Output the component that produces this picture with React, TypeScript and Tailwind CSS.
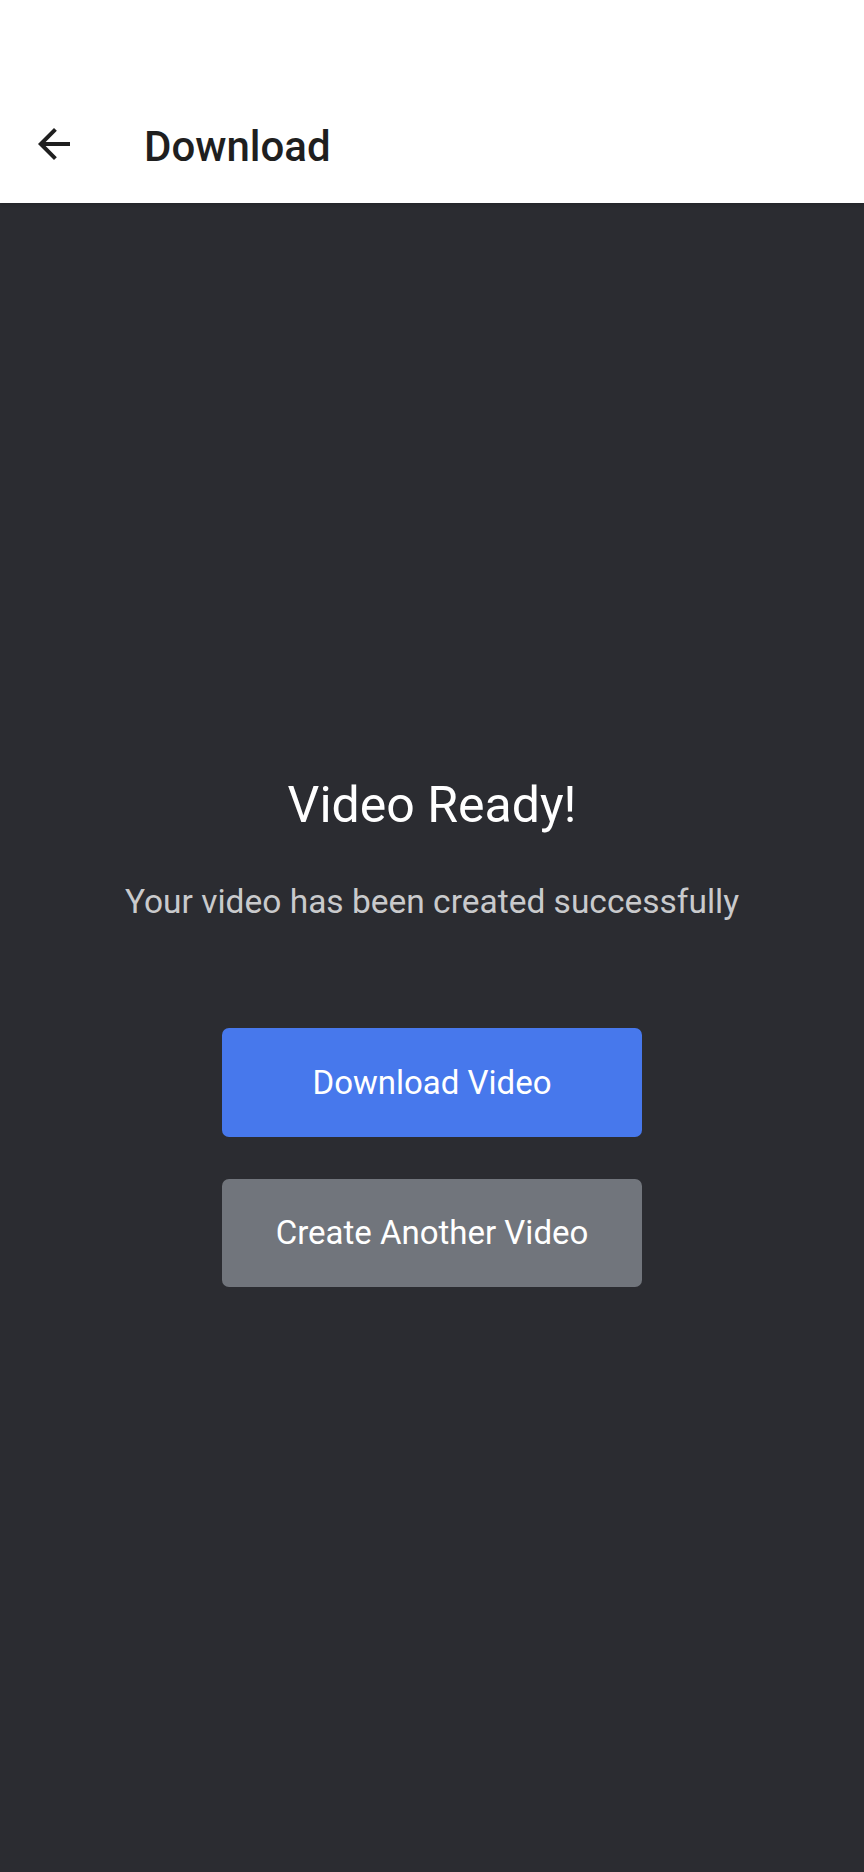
import React from 'react'

const ArrowBack: React.FC<{ className?: string }> = ({ className }) => (
  <svg viewBox="0 0 24 24" className={className} fill="currentColor" aria-hidden="true">
    <path d="M20 11H7.83l5.59-5.59L12 4l-8 8 8 8 1.41-1.41L7.83 13H20v-2z" />
  </svg>
)

export default function App() {
  return (
    <div
      className="flex min-h-[1872px] w-full flex-col bg-[#2b2c31]"
      style={{ fontFamily: 'Roboto, "Noto Sans", sans-serif' }}
    >
      <header className="flex h-[203px] shrink-0 items-start bg-white pt-[120px] shadow-[0_2px_3px_rgba(0,0,0,0.15)]">
        <button className="ml-[30px] flex h-[48px] w-[48px] items-center justify-center text-[#1f1f1f]" aria-label="Back">
          <ArrowBack className="h-[48px] w-[48px]" />
        </button>
        <h1 className="ml-[66px] mt-[3px] text-[42px] leading-[48px] font-medium text-[#1f1f1f]">Download</h1>
      </header>

      <main className="flex flex-1 flex-col items-center pt-[574px]">
        <h2 className="text-[50px] leading-[56px] text-white">Video Ready!</h2>
        <p className="mt-[49px] text-[33.5px] leading-[40px] text-[#c9cacc]">
          Your video has been created successfully
        </p>
        <div className="mt-[106px] flex w-[420px] flex-col gap-[42px]">
          <button className="h-[109px] w-full rounded-[7px] bg-[#4778ec] text-[33px] text-white">
            Download Video
          </button>
          <button className="h-[108px] w-full rounded-[7px] bg-[#71757c] text-[33px] text-white">
            Create Another Video
          </button>
        </div>
      </main>
    </div>
  )
}
